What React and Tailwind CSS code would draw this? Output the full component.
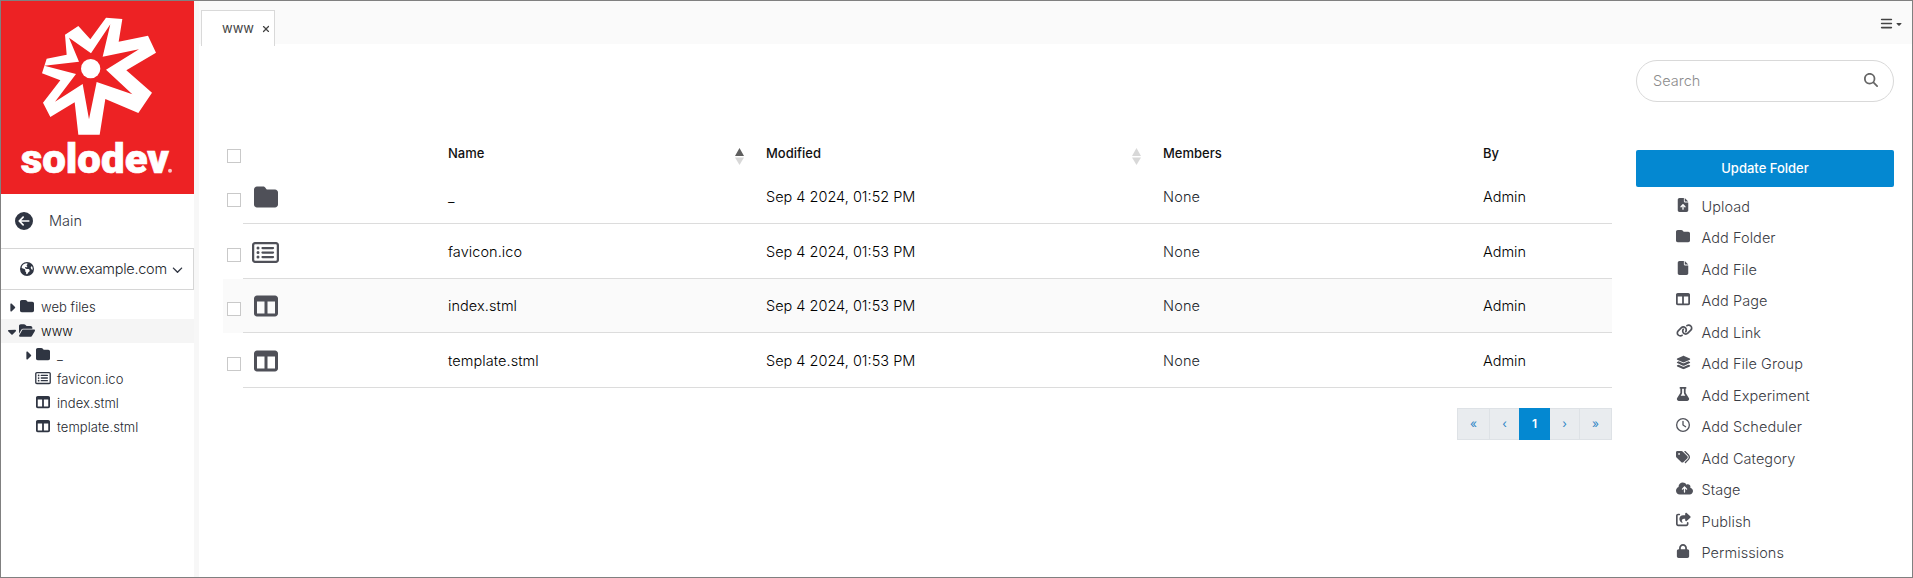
import {
  FaBars, FaCaretDown, FaCaretRight, FaCircleArrowLeft, FaCloudArrowUp, FaEarthAmericas, FaFile, FaFileArrowUp,
  FaFlask, FaFolder, FaFolderOpen, FaLayerGroup, FaLink, FaLock, FaMagnifyingGlass, FaRegClock, FaRegRectangleList,
  FaShareFromSquare, FaTableColumns, FaTags, FaChevronDown, FaXmark,
} from "react-icons/fa6";

function Logo() {
  return (
    <svg viewBox="0 0 579 579" className="block h-[193px] w-[193px] shrink-0 bg-[#ed2224]" role="img" aria-label="solodev">
      <g transform="translate(-3 -3)">
        <path fill="#fff" d="M318 53L367 57L356 125L444 107L468 158L379 211L456 278L415 339L316 297L299 404L235 404L224 307L151 351L129 308L181 241L126 220L140 176L200 164L195 104L235 78L271 118Z" />
        <path fill="#ed2224" d="M331 73L308 170L417 148L318 209L397 283L290 246L267 358L248 252L165 305L228 222L133 197L237 185L207 113L273 160Z" />
        <circle cx="272" cy="206" r="29" fill="#fff" />
        <text x="62" y="518" fontSize="122" fontWeight="900" stroke="#fff" strokeWidth="2" textLength="445" lengthAdjust="spacingAndGlyphs" fill="#fff" className="font-['Roboto',sans-serif]">solodev</text>
        <circle cx="510" cy="512" r="6" fill="#fff" fillOpacity=".75" />
      </g>
    </svg>
  );
}

const tree = [
  { label: "web files", Icon: FaFolder, Caret: FaCaretRight, depth: 0 },
  { label: "www", Icon: FaFolderOpen, Caret: FaCaretDown, depth: 0, active: true },
  { label: "_", Icon: FaFolder, Caret: FaCaretRight, depth: 1 },
  { label: "favicon.ico", Icon: FaRegRectangleList, depth: 1 },
  { label: "index.stml", Icon: FaTableColumns, depth: 1 },
  { label: "template.stml", Icon: FaTableColumns, depth: 1 },
];

const rows = [
  { name: "_", time: "01:52", Icon: FaFolder },
  { name: "favicon.ico", time: "01:53", Icon: FaRegRectangleList, wide: true },
  { name: "index.stml", time: "01:53", Icon: FaTableColumns, striped: true },
  { name: "template.stml", time: "01:53", Icon: FaTableColumns },
];

const actions = [
  ["Upload", FaFileArrowUp, 14], ["Add Folder", FaFolder, 14], ["Add File", FaFile, 14], ["Add Page", FaTableColumns, 14],
  ["Add Link", FaLink, 17], ["Add File Group", FaLayerGroup, 15], ["Add Experiment", FaFlask, 14], ["Add Scheduler", FaRegClock, 14],
  ["Add Category", FaTags, 14], ["Stage", FaCloudArrowUp, 17], ["Publish", FaShareFromSquare, 15], ["Permissions", FaLock, 14],
];

function Sidebar() {
  return (
    <aside className="flex w-[198px] shrink-0 flex-col border-r-[5px] border-[#f7f7f7] text-[#2f3542]">
      <Logo />
      <div className="flex h-[54px] shrink-0 items-center pl-[14px]">
        <FaCircleArrowLeft size={18} />
        <span className="ml-[16px] text-[14.5px] font-light text-[#33373f]">Main</span>
      </div>
      <div className="flex h-[42px] shrink-0 items-center border border-l-0 border-[#d6d6d6] pl-[19px]">
        <FaEarthAmericas size={14} />
        <span className="ml-[8px] w-[126px] text-[14.5px] font-light tracking-[-0.27px] text-[#23262d]">www.example.com</span>
        <FaChevronDown size={11} className="ml-[4px]" />
      </div>
      <ul className="mt-[5px] text-[13px] font-light tracking-[0.06px] text-[#23262d]">
        {tree.map(({ label, Icon, Caret, depth, active }) => (
          <li key={label} className={`flex h-6 items-center ${depth ? "pl-[21px]" : "pl-[5px]"} ${active ? "bg-[#f5f5f5] text-black" : ""}`}>
            <span className="flex w-[12px] justify-center">{Caret && <Caret size={13} className="text-[#2f3542]" />}</span>
            <Icon size={depth || !active ? 14 : 15} className="mb-[2px] ml-[1px] w-[16px] text-[#2f3542]" />
            <span className="ml-[6px] pt-px">{label}</span>
          </li>
        ))}
      </ul>
    </aside>
  );
}

function SortArrows({ up }) {
  return (
    <svg width="9" height="17" viewBox="0 0 9 17" className="mt-[7px]">
      <path d="M4.5 0L9 8H0Z" fill={up ? "#5f5f5f" : "#d8d8d8"} />
      <path d="M0 9.5H9L4.5 17Z" fill="#d8d8d8" />
    </svg>
  );
}

function Check({ className = "" }) {
  return <span className={`block h-[14px] w-[14px] shrink-0 border border-[#c9c9c9] bg-white ${className}`} />;
}

function FileTable() {
  return (
    <section className="ml-[24px] w-[1389px]">
      <div className="flex h-[38px] items-start text-[13px] font-medium text-[#111]">
        <Check className="ml-[4px] mt-[8px]" />
        <span className="ml-[207px] w-[287px] pt-[3px]">Name</span>
        <SortArrows up />
        <span className="ml-[22px] w-[366px] pt-[3px]">Modified</span>
        <SortArrows />
        <span className="ml-[22px] w-[320px] pt-[3px]">Members</span>
        <span className="pt-[3px]">By</span>
      </div>
      {rows.map(({ name, time, Icon, wide, striped }, i) => (
        <div key={name} className={`flex ${["h-[45px]", "h-[55px]", "h-[54px]", "h-[55px]"][i]} ${striped ? "bg-[#fafafa]" : ""}`}>
          <div className="flex w-[20px] items-end pb-[17px] pl-[4px]"><Check /></div>
          <div className="flex flex-1 items-end border-b border-[#dcdcdc] pb-[14px] text-[14.5px] font-light leading-[24px] text-black">
            <span className={`flex h-[24px] w-[205px] items-center text-[#4f5058] ${wide ? "pl-[9px]" : "pl-[11px]"}`}>
              <Icon size={wide ? 27 : 24} />
            </span>
            <span className="w-[318px] tracking-[0.07px]">{name}</span>
            <span className="w-[397px]">Sep 4 2024, {time} PM</span>
            <span className="w-[320px] tracking-[0.15px] text-[#23262d]">None</span>
            <span>Admin</span>
          </div>
        </div>
      ))}
      <nav className="mt-[20px] flex h-[32px] justify-end text-center text-[12px] leading-[30px] text-[#2f86c6]">
        <span className="w-[33px] border border-[#dee2e6] bg-[#e9ecef]">«</span>
        <span className="w-[29px] border-y border-[#dee2e6] bg-[#e9ecef]">‹</span>
        <span className="w-[31px] bg-[#0488d1] font-semibold leading-[32px] text-white">1</span>
        <span className="w-[29px] border-y border-[#dee2e6] bg-[#e9ecef]">›</span>
        <span className="w-[33px] border border-[#dee2e6] bg-[#e9ecef]">»</span>
      </nav>
    </section>
  );
}

function ActionPanel() {
  return (
    <aside className="ml-[24px] w-[258px]">
      <div className="mt-[16px] flex h-[42px] items-center justify-between rounded-full border border-[#d9d9d9] pl-[16px] pr-[15px]">
        <span className="pb-px text-[14.5px] font-light text-[#8c8c8c]">Search</span>
        <FaMagnifyingGlass size={14} className="mb-[2px] text-[#666]" />
      </div>
      <button className="mt-[48px] block h-[37px] w-full rounded-[2px] bg-[#0488d1] pt-px text-[13px] font-medium text-white">Update Folder</button>
      <ul className="mt-[4px] pl-[40px] text-[14.5px] font-light tracking-[0.06px] text-[#3a3c44]">
        {actions.map(([label, Icon, size]) => (
          <li key={label} className="flex h-[31.5px] items-center">
            <span className="flex w-[25.5px] pb-[4px] text-[#50525a]"><Icon size={size} /></span>
            {label}
          </li>
        ))}
      </ul>
    </aside>
  );
}

export default function App() {
  return (
    <div className="flex h-[578px] w-[1913px] overflow-hidden border border-[#808080] bg-white font-['Inter',sans-serif]">
      <Sidebar />
      <main className="flex min-w-0 flex-1 flex-col">
        <header className="flex h-[43px] justify-between bg-[#fafafa] pl-[2px] pr-[9px]">
          <div className="mt-[9px] flex h-[36px] w-[74px] items-center border border-b-0 border-[#d9d9d9] bg-white pl-[20px] text-[13px] text-[#444]">
            <span>www</span>
            <FaXmark size={10} className="ml-[7px] mt-px" />
          </div>
          <div className="flex items-center pt-[2px] text-[#444]">
            <FaBars size={13} />
            <FaCaretDown size={8} className="ml-[2px]" />
          </div>
        </header>
        <div className="flex">
          <div className="pt-[97px]"><FileTable /></div>
          <ActionPanel />
        </div>
      </main>
    </div>
  );
}
